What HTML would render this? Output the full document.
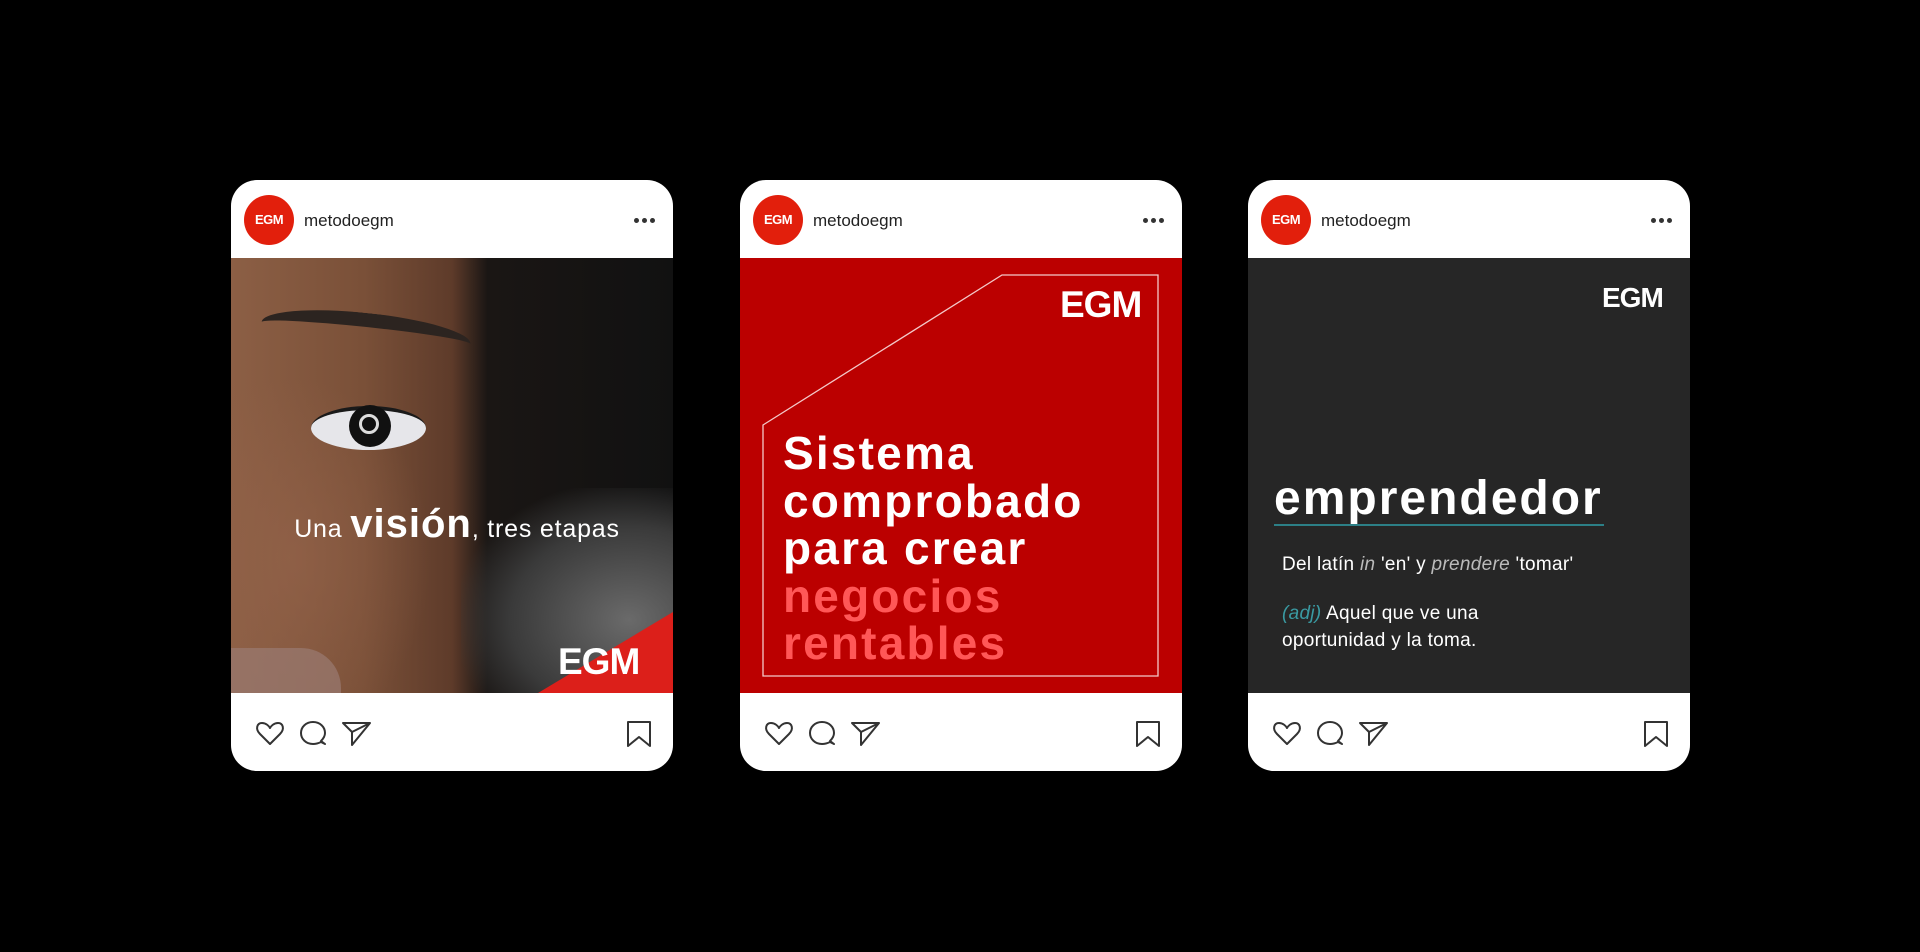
<!DOCTYPE html>
<html><head><meta charset="utf-8"><style>
*{margin:0;padding:0;box-sizing:border-box}
body{width:1920px;height:952px;background:#000;position:relative;overflow:hidden;font-family:"Liberation Sans",sans-serif}
.card{position:absolute;top:180px;width:442px;height:591px;background:#fff;border-radius:26px;overflow:hidden}
.hdr{position:absolute;left:0;top:0;width:100%;height:78px}
.av{position:absolute;left:13px;top:15px;width:50px;height:50px;border-radius:50%;background:#e21f0c;color:#fff;font-weight:bold;font-size:13px;line-height:50px;text-align:center;letter-spacing:-0.5px}
.un{position:absolute;left:73px;top:31px;font-size:17px;color:#222}
.dots{position:absolute;right:18px;top:38px;display:flex;gap:3px}
.dots i{display:block;width:5px;height:5px;border-radius:50%;background:#333}
.img{position:absolute;left:0;top:78px;width:100%;height:435px;overflow:hidden}
.ftr{position:absolute;left:0;top:513px;width:100%;height:78px}
.logo{position:absolute;color:#fff;font-weight:900;letter-spacing:-1px;font-family:"Liberation Sans",sans-serif}
</style></head><body>

<!-- card 1 -->
<div class="card" style="left:231px">
 <div class="hdr"><div class="av">EGM</div><div class="un">metodoegm</div><div class="dots"><i></i><i></i><i></i></div></div>
 <div class="img" style="background:linear-gradient(90deg,#8c5f45 0%,#7a5038 30%,#5e3b2a 50%,#1a1614 58%,#111 100%)">
  <div style="position:absolute;left:0;top:0;width:100%;height:100%;background:radial-gradient(ellipse 140px 180px at 60px 300px,rgba(150,100,75,.6),transparent)"></div>
  <div style="position:absolute;left:230px;top:230px;width:240px;height:220px;background:radial-gradient(ellipse at 70% 60%,#6a6a6a,#3a3a3a 50%,transparent 75%)"></div>
  <div style="position:absolute;left:30px;top:55px;width:210px;height:40px;border-top:14px solid #2c2420;border-radius:50% 50% 0 0;transform:rotate(6deg)"></div>
  <div style="position:absolute;left:80px;top:148px;width:115px;height:44px;border-radius:50%;background:#e6e6ea;border-top:4px solid #1a1a1a"></div>
  <div style="position:absolute;left:118px;top:147px;width:42px;height:42px;border-radius:50%;background:#111"></div>
  <div style="position:absolute;left:128px;top:156px;width:20px;height:20px;border-radius:50%;border:3px solid #ddd"></div>
  <div style="position:absolute;left:0;top:390px;width:110px;height:45px;background:#9a7a72;border-radius:0 40px 0 0;opacity:.7"></div>
  <div style="position:absolute;left:0;top:244px;width:100%;text-align:center;color:#fff;font-size:25px;letter-spacing:0.8px;white-space:nowrap"><span style="padding-left:10px">Una <b style="font-size:40px;font-weight:900;letter-spacing:1px">visión</b>, tres etapas</span></div>
  <svg style="position:absolute;left:0;top:0" width="442" height="435"><polygon points="307,435 442,354 442,435" fill="#dc1f1a"/></svg>
  <div class="logo" style="left:327px;top:383px;font-size:37px">EGM</div>
 </div>
 <div class="ftr"><svg width="442" height="78" fill="none" stroke="#333" stroke-width="2" stroke-linejoin="round">
  <path d="M39 51 L29 41 C24 36 26 30 31 30 C35 30 38 33 39 35 C40 33 43 30 47 30 C52 30 54 36 49 41 Z"/>
  <path d="M90 48 C93 45 94 43 94 40 C94 34 89 29 82 29 C75 29 70 34 70 40 C70 46 75 51 82 51 C85 51 88 50 90 49 L94 51 Z"/>
  <path d="M112 30 L139 30 L121 52 L121 39 Z M121 39 L139 30"/>
  <path d="M397 29 L419 29 L419 53 L408 44 L397 53 Z"/>
 </svg></div>
</div>

<!-- card 2 -->
<div class="card" style="left:740px">
 <div class="hdr"><div class="av">EGM</div><div class="un">metodoegm</div><div class="dots"><i></i><i></i><i></i></div></div>
 <div class="img" style="background:#bb0000">
  <svg style="position:absolute;left:0;top:0" width="442" height="435"><polygon points="23,167 262,17 418,17 418,418 23,418" fill="none" stroke="#f3c9c9" stroke-width="1.3"/></svg>
  <div class="logo" style="left:320px;top:26px;font-size:37px">EGM</div>
  <div style="position:absolute;left:43px;top:172px;font-size:46px;font-weight:900;line-height:47.5px;color:#fff;letter-spacing:2.2px;white-space:nowrap">Sistema<br>comprobado<br>para crear<br><span style="color:#ff5757">negocios<br>rentables</span></div>
 </div>
 <div class="ftr"><svg width="442" height="78" fill="none" stroke="#333" stroke-width="2" stroke-linejoin="round">
  <path d="M39 51 L29 41 C24 36 26 30 31 30 C35 30 38 33 39 35 C40 33 43 30 47 30 C52 30 54 36 49 41 Z"/>
  <path d="M90 48 C93 45 94 43 94 40 C94 34 89 29 82 29 C75 29 70 34 70 40 C70 46 75 51 82 51 C85 51 88 50 90 49 L94 51 Z"/>
  <path d="M112 30 L139 30 L121 52 L121 39 Z M121 39 L139 30"/>
  <path d="M397 29 L419 29 L419 53 L408 44 L397 53 Z"/>
 </svg></div>
</div>

<!-- card 3 -->
<div class="card" style="left:1248px">
 <div class="hdr"><div class="av">EGM</div><div class="un">metodoegm</div><div class="dots"><i></i><i></i><i></i></div></div>
 <div class="img" style="background:#262626">
  <div class="logo" style="left:354px;top:24px;font-size:28px">EGM</div>
  <div style="position:absolute;left:26px;top:266px;width:330px;height:2px;background:#2c7f86"></div>
  <div style="position:absolute;left:26px;top:216px;font-size:48px;font-weight:900;color:#fff;line-height:50px;letter-spacing:2px;white-space:nowrap">emprendedor</div>
  <div style="position:absolute;left:34px;top:296px;font-size:19px;line-height:22px;color:#fff;white-space:nowrap;letter-spacing:0.3px">Del latín <i style="color:#bbb">in</i> 'en' y <i style="color:#bbb">prendere</i> 'tomar'</div>
  <div style="position:absolute;left:34px;top:342px;font-size:19px;color:#fff;line-height:27px;white-space:nowrap;letter-spacing:0.3px"><i style="color:#3a9aa2">(adj)</i> Aquel que ve una<br>oportunidad y la toma.</div>
 </div>
 <div class="ftr"><svg width="442" height="78" fill="none" stroke="#333" stroke-width="2" stroke-linejoin="round">
  <path d="M39 51 L29 41 C24 36 26 30 31 30 C35 30 38 33 39 35 C40 33 43 30 47 30 C52 30 54 36 49 41 Z"/>
  <path d="M90 48 C93 45 94 43 94 40 C94 34 89 29 82 29 C75 29 70 34 70 40 C70 46 75 51 82 51 C85 51 88 50 90 49 L94 51 Z"/>
  <path d="M112 30 L139 30 L121 52 L121 39 Z M121 39 L139 30"/>
  <path d="M397 29 L419 29 L419 53 L408 44 L397 53 Z"/>
 </svg></div>
</div>
</body></html>
